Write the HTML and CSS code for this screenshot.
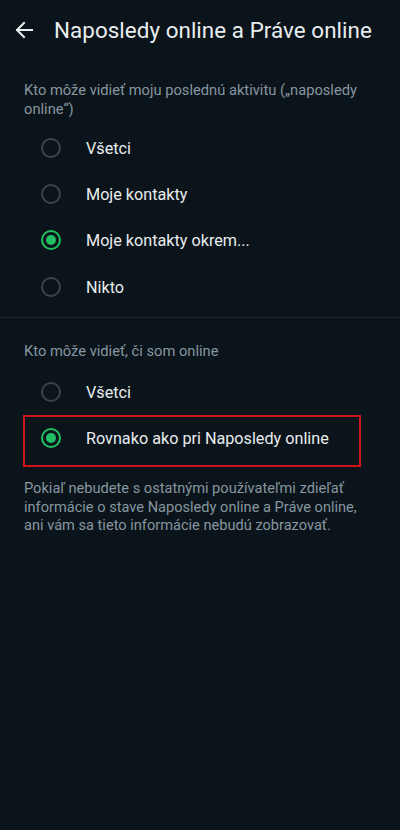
FILE: index.html
```html
<html>
<head>
<meta charset="utf-8">
<title>Naposledy online a Práve online</title>
<link rel="stylesheet" href="styles.css">
</head>
<body>

<div class="bar">
	<svg class="back" width="20" height="20" viewBox="0 0 20 20">
		<path d="M18 10H3M10 3L3 10L10 17" fill="none" stroke="#e9edef" stroke-width="2" stroke-linecap="square"/>
	</svg>
	<div class="title">Naposledy online a Práve online</div>
</div>

<div class="sect first">
	<div class="head">Kto môže vidieť moju poslednú aktivitu („naposledy online“)</div>
	<div class="opts">
		<div class="row"><span class="radio"></span><span class="lbl">Všetci</span></div>
		<div class="row"><span class="radio"></span><span class="lbl">Moje kontakty</span></div>
		<div class="row"><span class="radio on"></span><span class="lbl">Moje kontakty okrem...</span></div>
		<div class="row"><span class="radio"></span><span class="lbl">Nikto</span></div>
	</div>
</div>

<div class="line"></div>

<div class="sect second">
	<div class="head">Kto môže vidieť, či som online</div>
	<div class="opts">
		<div class="row"><span class="radio"></span><span class="lbl">Všetci</span></div>
		<div class="row mark"><span class="radio on"></span><span class="lbl">Rovnako ako pri Naposledy online</span></div>
	</div>
	<p class="note">Pokiaľ nebudete s ostatnými používateľmi zdieľať informácie o stave Naposledy online a Práve online, ani vám sa tieto informácie nebudú zobrazovať.</p>
</div>

</body>
</html>
```

FILE: styles.css
```css
html, body {
	margin: 0;
	padding: 0;
	background: #0b141a;
	font-family: Roboto, 'Liberation Sans', sans-serif;
	color: #e9edef;
}
body {
	width: 400px;
	height: 830px;
	overflow: hidden;
}
.bar {
	height: 58px;
	display: flex;
	align-items: center;
	padding-left: 14px;
}
.back {
	display: block;
	margin-top: 1px;
}
.title {
	font-size: 22.4px;
	margin-left: 20px;
	margin-top: 1px;
	letter-spacing: 0.05px;
}
.sect.first {
	padding-top: 23px;
}
.sect.second {
	padding-top: 24px;
}
.head {
	font-size: 14.7px;
	line-height: 19px;
	color: #8696a0;
	padding: 0 24px;
}
.opts {
	margin-top: 6px;
}
.second .opts {
	margin-top: 8px;
}
.row {
	height: 46px;
	display: flex;
	align-items: center;
	padding-left: 41px;
	position: relative;
}
.row:nth-child(4) {
	height: 48px;
}
.radio {
	width: 20px;
	height: 20px;
	box-sizing: border-box;
	border: 2px solid #3a454c;
	border-radius: 50%;
	display: flex;
	align-items: center;
	justify-content: center;
}
.radio.on {
	border-color: #21c063;
}
.radio.on::after {
	content: "";
	width: 10px;
	height: 10px;
	border-radius: 50%;
	background: #21c063;
}
.lbl {
	font-size: 16.2px;
	margin-left: 25px;
}
.line {
	height: 1px;
	background: #1c262d;
	margin-top: 6px;
}
.mark::before {
	content: "";
	position: absolute;
	left: 23px;
	top: 0;
	width: 338px;
	height: 52px;
	box-sizing: border-box;
	border: 2px solid #d3111d;
}
.note {
	margin: 18px 0 0 0;
	padding: 0 34px 0 24px;
	font-size: 14.6px;
	line-height: 18.5px;
	color: #8696a0;
}
```
